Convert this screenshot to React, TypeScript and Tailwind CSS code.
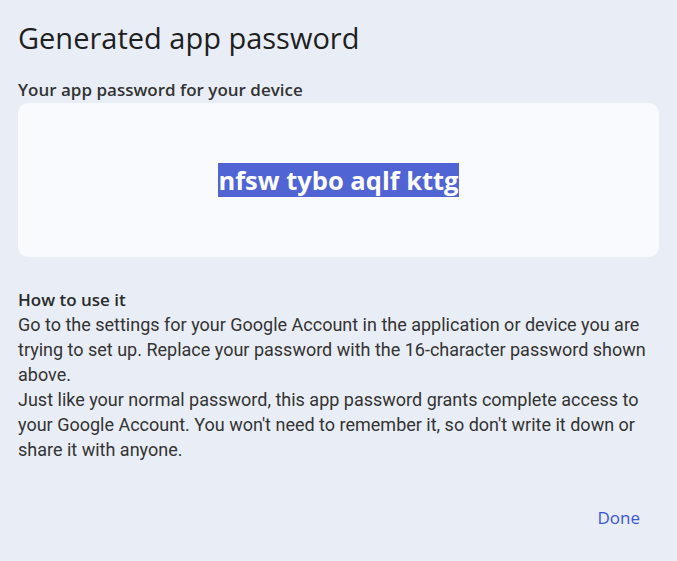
export default function App() {
  return (
    <div className="min-h-screen w-full bg-[#e9eef6] text-[#1f1f1f] font-['Roboto',sans-serif]">
      <div className="px-[18px] pt-[18px] pb-4">
        <h1 className="font-['Open_Sans',sans-serif] text-[29px] leading-10 text-[#1f1f1f]">
          Generated app password
        </h1>
        <h2 className="mt-[22px] font-['Open_Sans',sans-serif] text-[17px] font-semibold leading-5 text-[#333333]">
          Your app password for your device
        </h2>
        <div className="mt-[3px] flex h-[154px] items-center justify-center rounded-[10px] bg-[#f8fafd]">
          <span className="bg-[#5064d3] font-['Open_Sans',sans-serif] text-[25.5px] font-bold leading-[34px] text-white">
            nfsw tybo aqlf kttg
          </span>
        </div>
        <div className="mt-[30px] text-[18px] leading-[25px] text-[#333333]">
          <p className="font-['Open_Sans',sans-serif] text-[17px] font-semibold text-[#2a2a2a]">How to use it</p>
          <p>
            Go to the settings for your Google Account in the application or device you are
            trying to set up. Replace your password with the 16-character password shown
            above.
          </p>
          <p>
            Just like your normal password, this app password grants complete access to your
            Google Account. You won't need to remember it, so don't write it down or share it
            with anyone.
          </p>
        </div>
        <div className="mt-[43px] flex justify-end pr-[19px]">
          <button className="font-['Open_Sans',sans-serif] text-[17px] font-medium text-[#3b57d0]">
            Done
          </button>
        </div>
      </div>
    </div>
  );
}
